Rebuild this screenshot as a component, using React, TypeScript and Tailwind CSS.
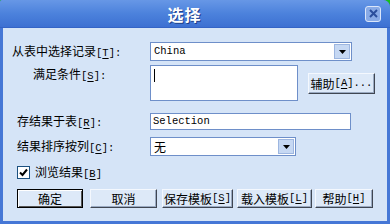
import React from 'react';

const cjk = '"Noto Sans CJK SC", "Liberation Sans", sans-serif';

// Latin part of a label, e.g. "[T]:" — SimSun-like fixed width glyphs
const Key: React.FC<{ k: string; tail?: string }> = ({ k, tail = '' }) => (
  <span className="font-['Liberation_Mono',monospace] text-[10.5px]">
    [<span className="underline underline-offset-2">{k}</span>]{tail}
  </span>
);

const DropArrow: React.FC = () => (
  <div className="w-[16px] h-full bg-[#c6d8f3] border border-[#9db6e0] flex items-center justify-center">
    <svg width="7" height="4" viewBox="0 0 7 4">
      <path d="M0 0H7L3.5 4Z" fill="#000" />
    </svg>
  </div>
);

const Btn: React.FC<{ w: string; def?: boolean; children: React.ReactNode; className?: string }> = ({
  w,
  def,
  children,
  className = '',
}) => (
  <div
    className={`${w} h-[19px] flex items-center justify-center text-[12px] text-black bg-[#dde9f8] ${
      def
        ? 'border border-black shadow-[inset_1px_1px_0_#fff,inset_-1px_-1px_0_#555]'
        : 'border border-t-[#f4f8fe] border-l-[#f4f8fe] border-r-[#3f4652] border-b-[#3f4652] shadow-[inset_-1px_-1px_0_#9aaac2]'
    } ${className}`}
  >
    {children}
  </div>
);

export default function App() {
  return (
    <div className="w-[390px] h-[224px] bg-[#19c019] overflow-hidden" style={{ fontFamily: cjk }}>
      <div className="w-full h-full flex flex-col bg-[#4577d6] rounded-tr-[7px] rounded-tl-[2px] overflow-hidden">
        {/* title bar */}
        <div className="h-[28px] flex items-center bg-gradient-to-b from-[#6797e6] via-[#4c82dc] to-[#3d70d2] border-b border-[#3464c6]">
          <div className="flex-1 text-center text-white font-bold text-[16px] tracking-[1px] pl-[4px] [text-shadow:1px_1px_0_#1e3f8a]">
            选择
          </div>
          <div className="w-[16px] h-[16px] mr-[9px] rounded-[3px] bg-[#88aae6] border border-[#dbe6fa] flex items-center justify-center">
            <svg width="9" height="9" viewBox="0 0 9 9">
              <path d="M1 1L8 8M8 1L1 8" stroke="#2b4e9c" strokeWidth="2" />
            </svg>
          </div>
        </div>

        {/* body */}
        <div className="flex-1 mx-[3px] mb-[3px] bg-[#d5e4f7] text-[12px] text-black flex flex-col pt-[14px]">
          {/* row 1 */}
          <div className="flex items-center h-[19px]">
            <div className="w-[147px] pl-[9px] leading-none">
              从表中选择记录<Key k="T" tail=":" />
            </div>
            <div className="w-[202px] h-full flex bg-white border border-[#6e8fc9] p-[1px]">
              <div className="flex-1 pl-[2px] flex items-center font-['Liberation_Mono',monospace] text-[10.5px]">
                China
              </div>
              <DropArrow />
            </div>
          </div>

          {/* row 2 */}
          <div className="flex mt-[4px]">
            <div className="w-[147px] pl-[30px] pt-[2px] leading-[14px]">
              满足条件<Key k="S" tail=":" />
            </div>
            <div className="w-[148px] h-[36px] bg-white border border-[#6e8fc9] p-[3px]">
              <div className="w-[1px] h-[13px] bg-black" />
            </div>
            <Btn w="w-[67px]" className="ml-[10px] mt-[8px] !h-[21px]">
              辅助<Key k="A" tail="..." />
            </Btn>
          </div>

          {/* row 3 */}
          <div className="flex items-center h-[17px] mt-[12px]">
            <div className="w-[147px] pl-[14px] leading-none">
              存结果于表<Key k="R" tail=":" />
            </div>
            <div className="w-[201px] h-full bg-white border border-[#6e8fc9] pl-[2px] flex items-center font-['Liberation_Mono',monospace] text-[10.5px]">
              Selection
            </div>
          </div>

          {/* row 4 */}
          <div className="flex items-center h-[19px] mt-[7px]">
            <div className="w-[147px] pl-[14px] leading-none">
              结果排序按列<Key k="C" tail=":" />
            </div>
            <div className="w-[146px] h-full flex bg-white border border-[#6e8fc9] p-[1px]">
              <div className="flex-1 pl-[2px] flex items-center">无</div>
              <DropArrow />
            </div>
          </div>

          {/* row 5 */}
          <div className="flex items-center h-[13px] mt-[10px] pl-[14px]">
            <div className="w-[13px] h-[13px] bg-white border border-[#1c5180] flex items-center justify-center">
              <svg width="9" height="9" viewBox="0 0 9 9">
                <path d="M1 4.5L3.5 7L8 1.5" stroke="#000" strokeWidth="2" fill="none" />
              </svg>
            </div>
            <div className="ml-[5px] leading-none">
              浏览结果<Key k="B" />
            </div>
          </div>

          {/* buttons */}
          <div className="flex mt-[10px] pl-[14px]">
            <Btn w="w-[66px]" def>
              确定
            </Btn>
            <Btn w="w-[67px]" className="ml-[7px]">
              取消
            </Btn>
            <Btn w="w-[71px]" className="ml-[5px]">
              保存模板<Key k="S" />
            </Btn>
            <Btn w="w-[75px]" className="ml-[4px]">
              载入模板<Key k="L" />
            </Btn>
            <Btn w="w-[58px]" className="ml-[3px]">
              帮助<Key k="H" />
            </Btn>
          </div>
        </div>
      </div>
    </div>
  );
}
